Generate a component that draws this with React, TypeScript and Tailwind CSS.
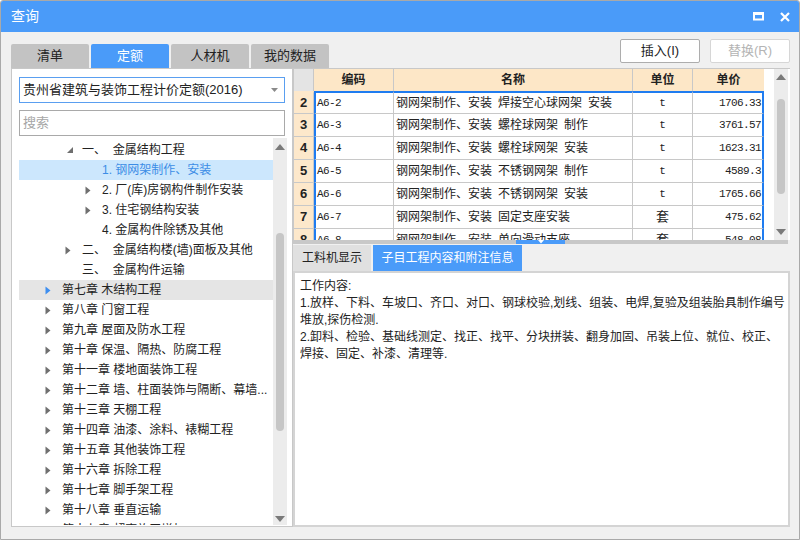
import React from 'react';

const font = { fontFamily: '"Liberation Sans", "Noto Sans CJK SC", sans-serif' };

type TreeNode = { label: string; level: number; arrow: 'open' | 'closed' | 'none'; state?: 'hl' | 'sel' };

const tree: TreeNode[] = [
  { label: '一、\u00a0\u00a0金属结构工程', level: 1, arrow: 'open' },
  { label: '1. 钢网架制作、安装', level: 2, arrow: 'none', state: 'hl' },
  { label: '2. 厂(库)房钢构件制作安装', level: 2, arrow: 'closed' },
  { label: '3. 住宅钢结构安装', level: 2, arrow: 'closed' },
  { label: '4. 金属构件除锈及其他', level: 2, arrow: 'none' },
  { label: '二、\u00a0\u00a0金属结构楼(墙)面板及其他', level: 1, arrow: 'closed' },
  { label: '三、\u00a0\u00a0金属构件运输', level: 1, arrow: 'none' },
  { label: '第七章 木结构工程', level: 0, arrow: 'closed', state: 'sel' },
  { label: '第八章 门窗工程', level: 0, arrow: 'closed' },
  { label: '第九章 屋面及防水工程', level: 0, arrow: 'closed' },
  { label: '第十章 保温、隔热、防腐工程', level: 0, arrow: 'closed' },
  { label: '第十一章 楼地面装饰工程', level: 0, arrow: 'closed' },
  { label: '第十二章 墙、柱面装饰与隔断、幕墙...', level: 0, arrow: 'closed' },
  { label: '第十三章 天棚工程', level: 0, arrow: 'closed' },
  { label: '第十四章 油漆、涂料、裱糊工程', level: 0, arrow: 'closed' },
  { label: '第十五章 其他装饰工程', level: 0, arrow: 'closed' },
  { label: '第十六章 拆除工程', level: 0, arrow: 'closed' },
  { label: '第十七章 脚手架工程', level: 0, arrow: 'closed' },
  { label: '第十八章 垂直运输', level: 0, arrow: 'closed' },
  { label: '第十九章 超高施工增加', level: 0, arrow: 'closed' },
];

// en space between name parts, as in the grid
const rows = [
  { n: 2, code: 'A6-2', name: '钢网架制作、安装\u2002焊接空心球网架\u2002安装', unit: 't', price: '1706.33' },
  { n: 3, code: 'A6-3', name: '钢网架制作、安装\u2002螺栓球网架\u2002制作', unit: 't', price: '3761.57' },
  { n: 4, code: 'A6-4', name: '钢网架制作、安装\u2002螺栓球网架\u2002安装', unit: 't', price: '1623.31' },
  { n: 5, code: 'A6-5', name: '钢网架制作、安装\u2002不锈钢网架\u2002制作', unit: 't', price: '4589.3' },
  { n: 6, code: 'A6-6', name: '钢网架制作、安装\u2002不锈钢网架\u2002安装', unit: 't', price: '1765.66' },
  { n: 7, code: 'A6-7', name: '钢网架制作、安装\u2002固定支座安装', unit: '套', price: '475.62' },
  { n: 8, code: 'A6-8', name: '钢网架制作、安装\u2002单向滑动支座', unit: '套', price: '548.08' },
];

const mono = { fontFamily: '"Liberation Mono", monospace' };

function Arrow({ kind, blue }: { kind: 'open' | 'closed' | 'none'; blue?: boolean }) {
  if (kind === 'none') return null;
  if (kind === 'open') {
    return (
      <svg width="7" height="7" viewBox="0 0 7 7" className="ml-[3px]">
        <polygon points="6,0 6,6 0,6" fill="#6f6f6f" />
      </svg>
    );
  }
  return (
    <svg width="6" height="9" viewBox="0 0 6 9" className="ml-[1px]">
      <polygon points="0.5,0.5 5.5,4.5 0.5,8.5" fill={blue ? '#3d8ef0' : '#6f6f6f'} />
    </svg>
  );
}

function Scrollbar({ thumbTop, thumbHeight, arrowTop, arrowBottom }: { thumbTop: number; thumbHeight: number; arrowTop: number; arrowBottom: number }) {
  return (
    <div className="relative w-[14px] h-full bg-[#ececec]">
      <svg width="10" height="6" viewBox="0 0 10 6" className="absolute left-[2px]" style={{ top: arrowTop }}>
        <polygon points="5,0 10,6 0,6" fill="#7a7a7a" />
      </svg>
      <div className="absolute left-[3px] w-[8px] rounded-full bg-[#c6c6c6]" style={{ top: thumbTop, height: thumbHeight }} />
      <svg width="10" height="6" viewBox="0 0 10 6" className="absolute left-[2px]" style={{ top: arrowBottom }}>
        <polygon points="0,0 10,0 5,6" fill="#7a7a7a" />
      </svg>
    </div>
  );
}

export default function App() {
  return (
    <div style={font} className="w-[800px] h-[540px] flex flex-col bg-[#f0f0f0] border border-[#a9a9a9] rounded-t-[3px] overflow-hidden text-[#222]">
      {/* title bar */}
      <div className="h-[31px] shrink-0 bg-[#4a9bf9] flex items-center justify-between pl-[10px] pr-[9px]">
        <span className="text-white text-[14px]">查询</span>
        <div className="flex items-center gap-[16px]">
          <svg width="11" height="9" viewBox="0 0 11 9">
            <rect x="1" y="1.5" width="9" height="6" fill="none" stroke="#fff" strokeWidth="2" />
            <rect x="0" y="0" width="11" height="3" fill="#fff" />
          </svg>
          <svg width="10" height="10" viewBox="0 0 10 10">
            <path d="M1 1 L9 9 M9 1 L1 9" stroke="#fff" strokeWidth="2.2" />
          </svg>
        </div>
      </div>

      {/* tabs + buttons */}
      <div className="h-[36px] shrink-0 flex justify-between pl-[10px] pr-[9px]">
        <div className="flex gap-[2px] self-end">
          {['清单', '定额', '人材机', '我的数据'].map((t, i) => (
            <div
              key={t}
              className={
                'w-[78px] h-[24px] flex items-center justify-center text-[13px] rounded-t-[2px] ' +
                (i === 1 ? 'bg-[#4a9bf9] text-white' : 'bg-[#c3c3c3] text-[#222]')
              }
            >
              {t}
            </div>
          ))}
        </div>
        <div className="flex gap-[10px] mt-[7px]">
          <button className="w-[80px] h-[24px] bg-white border border-[#adadad] rounded-[2px] text-[13px] text-[#222]">插入(I)</button>
          <button className="w-[80px] h-[24px] bg-white border border-[#d6d6d6] rounded-[2px] text-[13px] text-[#b4b4b4]">替换(R)</button>
        </div>
      </div>

      {/* main */}
      <div className="flex-1 flex pl-[10px] pr-[9px] pb-[12px] min-h-0">
        {/* left panel */}
        <div className="w-[282px] shrink-0 border border-[#c8c8c8] bg-white flex flex-col">
          <div className="mx-[7px] mt-[8px] h-[26px] border border-[#5a9ff0] flex items-center justify-between pl-[3px] pr-[6px]">
            <span className="text-[13px]">贵州省建筑与装饰工程计价定额(2016)</span>
            <svg width="7" height="4" viewBox="0 0 7 4">
              <polygon points="0,0 7,0 3.5,4" fill="#8a8a8a" />
            </svg>
          </div>
          <div className="mx-[7px] mt-[7px] h-[26px] border border-[#a9a9a9] flex items-center pl-[3px]">
            <span className="text-[13px] text-[#a6a6a6]">搜索</span>
          </div>
          <div className="flex-1 mt-[2px] mb-[1px] flex pl-[7px] pr-[5px] min-h-0">
            <div className="flex-1 overflow-hidden pt-[2px]">
              {tree.map((n, i) => (
                <div
                  key={i}
                  className={
                    'h-[20px] flex items-center whitespace-nowrap ' +
                    (n.state === 'hl' ? 'bg-[#cce7fd] text-[#3c8de6]' : n.state === 'sel' ? 'bg-[#e5e5e5]' : '')
                  }
                  style={{ paddingLeft: 25 + n.level * 20 }}
                >
                  <div className="w-[18px] flex items-center">
                    <Arrow kind={n.arrow} blue={n.state === 'sel'} />
                  </div>
                  <span className="text-[12px]">{n.label}</span>
                </div>
              ))}
            </div>
            <Scrollbar thumbTop={95} thumbHeight={198} arrowTop={6} arrowBottom={378} />
          </div>
        </div>

        {/* right panel */}
        <div className="flex-1 flex flex-col min-w-0">
          {/* table */}
          <div className="h-[172px] shrink-0 border-t border-l border-[#c8c8c8] bg-white flex overflow-hidden">
            <div className="w-[471px] shrink-0">
              <div className="flex h-[22px] text-[12px] font-bold">
                <div className="w-[20px] bg-[#e4e4e4] border-r border-[#c8c8c8]" />
                <div className="w-[80px] bg-[#fde7c7] border-r border-[#c8c8c8] flex items-center justify-center">编码</div>
                <div className="w-[239px] bg-[#fde7c7] border-r border-[#c8c8c8] flex items-center justify-center">名称</div>
                <div className="w-[60px] bg-[#fde7c7] border-r border-[#c8c8c8] flex items-center justify-center">单位</div>
                <div className="w-[71px] bg-[#fde7c7] flex items-center justify-center">单价</div>
              </div>
              {rows.map((r, i) => (
                <div key={r.n} className="flex h-[23px] text-[12px]">
                  <div className={'w-[20px] bg-[#fde8cb] border-r border-b border-[#c8c8c8] flex items-center justify-center font-bold text-[13px] ' + (i === 0 ? 'border-t-2 border-t-[#fde8cb]' : '')}>
                    {r.n}
                  </div>
                  <div className={'w-[80px] border-l-2 border-l-[#1f7cf0] border-r border-b border-[#c8c8c8] flex items-center pl-[1px] ' + (i === 0 ? 'border-t-2 border-t-[#1f7cf0]' : '')}>
                    <span style={mono} className="text-[11px] tracking-[-0.6px]">{r.code}</span>
                  </div>
                  <div className={'w-[239px] border-r border-b border-[#c8c8c8] flex items-center pl-[2px] whitespace-nowrap ' + (i === 0 ? 'border-t-2 border-t-[#1f7cf0]' : '')}>
                    {r.name}
                  </div>
                  <div className={'w-[60px] border-r border-b border-[#c8c8c8] flex items-center justify-center ' + (i === 0 ? 'border-t-2 border-t-[#1f7cf0]' : '')}>
                    <span style={r.unit === 't' ? mono : undefined} className={r.unit === 't' ? 'text-[11px]' : 'text-[13px]'}>{r.unit}</span>
                  </div>
                  <div className={'w-[71px] border-r-2 border-r-[#1f7cf0] border-b border-b-[#c8c8c8] flex items-center justify-end pr-[1px] ' + (i === 0 ? 'border-t-2 border-t-[#1f7cf0]' : '')}>
                    <span style={mono} className="text-[11px] tracking-[-0.6px]">{r.price}</span>
                  </div>
                </div>
              ))}
            </div>
            <div className="flex-1" />
            <div className="h-full">
              <Scrollbar thumbTop={30} thumbHeight={95} arrowTop={5} arrowBottom={160} />
            </div>
            <div className="w-[2px]" />
          </div>

          {/* splitter */}
          <div className="h-[4px] shrink-0 bg-[#c8c8c8] relative mr-[2px]">
            <div className="absolute left-[223px] top-0 w-[49px] h-[4px] bg-[#4a9bf9] flex justify-center">
              <svg width="6" height="4" viewBox="0 0 6 4">
                <polygon points="0,0 6,0 3,3.5" fill="#fff" />
              </svg>
            </div>
          </div>

          {/* bottom tabs */}
          <div className="h-[27px] shrink-0 flex gap-[2px] items-end">
            <div className="w-[78px] h-[26px] bg-[#e0e0e0] flex items-center justify-center text-[12px]">工料机显示</div>
            <div className="w-[149px] h-[26px] bg-[#4a9bf9] text-white flex items-center justify-center text-[12px]">子目工程内容和附注信息</div>
          </div>

          {/* content */}
          <div className="flex-1 border-2 border-[#d4d4d4] bg-white pl-[5px] pt-[5px] text-[12px] leading-[17px] whitespace-nowrap overflow-hidden">
            <div>工作内容:</div>
            <div>1.放样、下料、车坡口、齐口、对口、钢球校验,划线、组装、电焊,复验及组装胎具制作编号</div>
            <div>堆放,探伤检测.</div>
            <div>2.卸料、检验、基础线测定、找正、找平、分块拼装、翻身加固、吊装上位、就位、校正、</div>
            <div>焊接、固定、补漆、清理等.</div>
          </div>
        </div>
      </div>
    </div>
  );
}
